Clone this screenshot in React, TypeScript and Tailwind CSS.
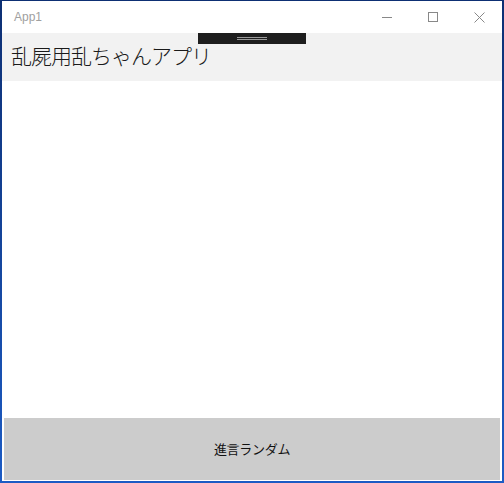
import React from 'react';

const font = { fontFamily: '"Noto Sans CJK JP", "Noto Sans", sans-serif' };

export default function App() {
  return (
    <div
      className="w-[504px] h-[483px] bg-gradient-to-b from-[#0d2f73] to-[#1c5bc4] p-[2px] pt-[1px]"
      style={font}
    >
      <div className="w-full h-full bg-white flex flex-col relative">
        {/* タイトルバー */}
        <div className="h-[32px] flex items-center justify-between shrink-0">
          <span className="pl-[12px] text-[12px] text-[#a0a0a0] font-['Liberation_Sans',sans-serif]">App1</span>
          <div className="flex h-full text-[#777]">
            <div className="w-[46px] flex items-center justify-center">
              <svg width="10" height="10" viewBox="0 0 10 10"><path d="M0 5.5h10" stroke="#888" strokeWidth="1" /></svg>
            </div>
            <div className="w-[46px] flex items-center justify-center">
              <svg width="10" height="10" viewBox="0 0 10 10"><rect x="0.5" y="0.5" width="9" height="9" fill="none" stroke="#888" strokeWidth="1" /></svg>
            </div>
            <div className="w-[46px] flex items-center justify-center">
              <svg width="11" height="11" viewBox="0 0 11 11"><path d="M0.5 0.5l10 10M10.5 0.5l-10 10" stroke="#888" strokeWidth="1" /></svg>
            </div>
          </div>
        </div>

        {/* ヘッダー */}
        <div className="h-[48px] bg-[#f2f2f2] shrink-0 flex items-center pl-[9px] relative">
          <span className="text-[21px] font-light tracking-[-1px] text-[#1a1a1a] pb-[2px]">乱屍用乱ちゃんアプリ</span>
          <div className="absolute top-0 left-[196px] w-[108px] h-[11px] bg-[#1e1e1e] flex flex-col items-center justify-center gap-[1px]">
            <div className="w-[30px] h-[1px] bg-[#9a9a9a]" />
            <div className="w-[30px] h-[1px] bg-[#9a9a9a]" />
          </div>
        </div>

        <div className="flex-1" />

        <div className="px-[2px] pb-[1px]">
          <button className="w-full h-[62px] bg-[#cccccc] text-[13px] tracking-[-0.3px] text-[#111] flex items-center justify-center">
            進言ランダム
          </button>
        </div>
      </div>
    </div>
  );
}
